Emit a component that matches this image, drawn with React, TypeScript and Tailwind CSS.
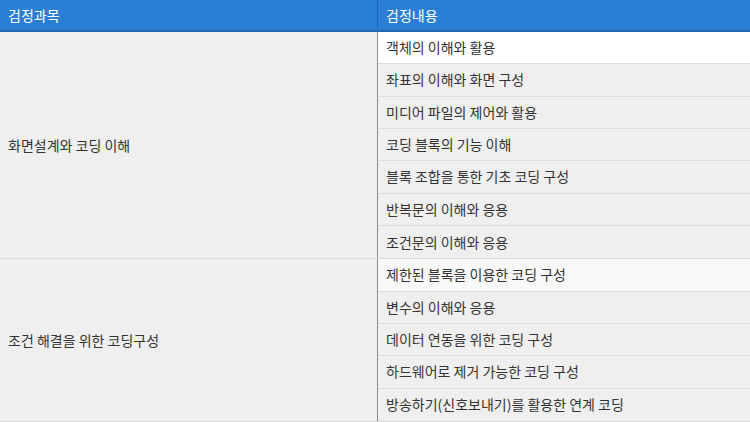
const groups = [
  {
    subject: '화면설계와 코딩 이해',
    items: [
      '객체의 이해와 활용',
      '좌표의 이해와 화면 구성',
      '미디어 파일의 제어와 활용',
      '코딩 블록의 기능 이해',
      '블록 조합을 통한 기초 코딩 구성',
      '반복문의 이해와 응용',
      '조건문의 이해와 응용',
    ],
  },
  {
    subject: '조건 해결을 위한 코딩구성',
    items: [
      '제한된 블록을 이용한 코딩 구성',
      '변수의 이해와 응용',
      '데이터 연동을 위한 코딩 구성',
      '하드웨어로 제거 가능한 코딩 구성',
      '방송하기(신호보내기)를 활용한 연계 코딩',
    ],
  },
];

function rowBg(text: string) {
  if (text === '객체의 이해와 활용') return 'bg-white';
  if (text === '제한된 블록을 이용한 코딩 구성') return 'bg-[#f8f8f8]';
  return 'bg-[#efefef]';
}

export default function App() {
  return (
    <div
      className="w-[750px] h-[422px] overflow-hidden bg-[#efefef] text-[14px] text-[#333]"
      style={{ fontFamily: '"Noto Sans CJK KR", "Noto Sans", sans-serif' }}
    >
      <div className="flex h-[32px] bg-[#2a7fd5] border-b-2 border-[#1c68b6] text-white">
        <div className="w-[378px] flex items-center pl-2 border-r border-[#1c68b6]">검정과목</div>
        <div className="flex-1 flex items-center pl-2">검정내용</div>
      </div>
      {groups.map((g) => (
        <div key={g.subject} className="flex border-b border-[#dcdcdc]">
          <div className="w-[378px] flex items-center pl-2 border-r border-[#8a8a8a]">{g.subject}</div>
          <div className="flex-1 flex flex-col">
            {g.items.map((t, i) => (
              <div
                key={t}
                className={`h-[32.33px] flex items-center pl-2 ${rowBg(t)} ${
                  i < g.items.length - 1 ? 'border-b border-[#dcdcdc]' : ''
                }`}
              >
                {t}
              </div>
            ))}
          </div>
        </div>
      ))}
    </div>
  );
}
